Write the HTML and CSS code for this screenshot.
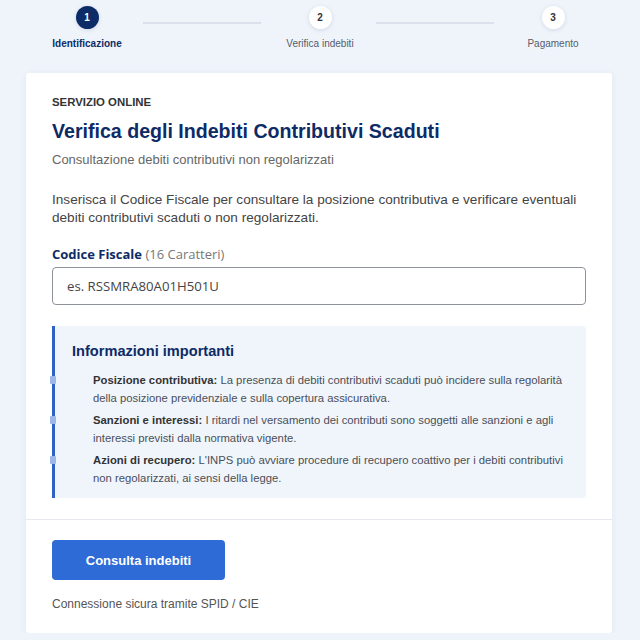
FILE: index.html
```html
<!DOCTYPE html>
<html lang="it">
<head>
<meta charset="utf-8">
<title>Verifica degli Indebiti Contributivi Scaduti</title>
<link rel="stylesheet" href="styles.css">
</head>
<body>
  <nav class="stepper">
    <div class="step step--active">
      <span class="step__dot">1</span>
      <span class="step__label">Identificazione</span>
    </div>
    <div class="step__line"></div>
    <div class="step">
      <span class="step__dot">2</span>
      <span class="step__label">Verifica indebiti</span>
    </div>
    <div class="step__line"></div>
    <div class="step">
      <span class="step__dot">3</span>
      <span class="step__label">Pagamento</span>
    </div>
  </nav>

  <main class="card">
    <section class="card__body">
      <p class="eyebrow">SERVIZIO ONLINE</p>
      <h1 class="title">Verifica degli Indebiti Contributivi Scaduti</h1>
      <p class="subtitle">Consultazione debiti contributivi non regolarizzati</p>
      <p class="intro">Inserisca il Codice Fiscale per consultare la posizione contributiva e verificare eventuali debiti contributivi scaduti o non regolarizzati.</p>

      <label class="field-label" for="cf"><strong>Codice Fiscale</strong> (16 Caratteri)</label>
      <input class="field-input" id="cf" type="text" placeholder="es. RSSMRA80A01H501U">

      <div class="info">
        <h2 class="info__title">Informazioni importanti</h2>
        <ul class="info__list">
          <li><b>Posizione contributiva:</b> La presenza di debiti contributivi scaduti può incidere sulla regolarità della posizione previdenziale e sulla copertura assicurativa.</li>
          <li><b>Sanzioni e interessi:</b> I ritardi nel versamento dei contributi sono soggetti alle sanzioni e agli interessi previsti dalla normativa vigente.</li>
          <li><b>Azioni di recupero:</b> L'INPS può avviare procedure di recupero coattivo per i debiti contributivi non regolarizzati, ai sensi della legge.</li>
        </ul>
      </div>
    </section>

    <footer class="card__footer">
      <button class="btn" type="button">Consulta indebiti</button>
      <p class="secure">Connessione sicura tramite SPID / CIE</p>
    </footer>
  </main>
</body>
</html>
```

FILE: styles.css
```css
* { box-sizing: border-box; }

body {
  margin: 0;
  background: #eff4fb;
  font-family: "Liberation Sans", Arial, sans-serif;
  color: #333;
}

/* progress steps */
.stepper {
  display: grid;
  grid-template-columns: 110px 1fr 110px 1fr 110px;
  margin: 0 32px;
  padding-top: 6px;
  height: 73px;
}

.step {
  display: flex;
  flex-direction: column;
  align-items: center;
}

.step__dot {
  width: 23px;
  height: 23px;
  border-radius: 50%;
  background: #fff;
  color: #333;
  font-size: 10px;
  font-weight: 700;
  display: flex;
  align-items: center;
  justify-content: center;
  box-shadow: 0 1px 4px rgba(30, 50, 90, 0.14);
}

.step--active .step__dot {
  background: #0d2b66;
  color: #fff;
}

.step__label {
  margin-top: 9px;
  font-size: 10px;
  color: #555c6a;
}

.step--active .step__label {
  color: #0d2b66;
  font-weight: 700;
}

.step__line {
  height: 2px;
  background: #dbe1ec;
  margin: 16px 4px 0 1px;
}

/* card */
.card {
  margin: 0 28px 0 26px;
  background: #fff;
  border-radius: 3px;
  box-shadow: 0 1px 6px rgba(30, 50, 90, 0.07);
}

.card__body {
  padding: 22px 26px 21px;
  border-bottom: 1px solid #e6e9ef;
}

.eyebrow {
  margin: 0;
  font-size: 11.4px;
  line-height: 14px;
  font-weight: 700;
  color: #333;
}

.title {
  margin: 10px 0 0;
  font-size: 19.6px;
  line-height: 24px;
  color: #0d2b66;
}

.subtitle {
  margin: 8px 0 0;
  font-size: 13px;
  line-height: 18px;
  color: #666;
}

.intro {
  margin: 22px 0 0;
  font-size: 13.6px;
  line-height: 18px;
  color: #444;
}

.field-label {
  display: block;
  margin-top: 18px;
  font-family: "Open Sans", sans-serif;
  font-size: 13px;
  line-height: 18px;
  color: #777;
}

.field-label strong {
  color: #0d2b66;
  font-weight: 700;
}

.field-input {
  display: block;
  width: 100%;
  height: 38px;
  margin-top: 4px;
  padding: 0 14px;
  border: 1px solid #8e939b;
  border-radius: 4px;
  font-family: "Open Sans", sans-serif;
  font-size: 13.2px;
  color: #333;
}

.field-input::placeholder { color: #444; }

/* info panel */
.info {
  margin-top: 21px;
  background: #f0f5fc;
  border-left: 3px solid #2b63c9;
  border-radius: 0 4px 4px 0;
  padding: 15px 18px 11px 17px;
}

.info__title {
  margin: 0;
  font-size: 14.6px;
  line-height: 20px;
  color: #0d2b66;
}

.info__list {
  list-style: none;
  margin: 10px 0 0;
  padding-left: 21px;
}

.info__list li {
  position: relative;
  font-size: 11.3px;
  line-height: 18px;
  color: #4a4f57;
}

.info__list li + li { margin-top: 4px; }

.info__list li b { color: #333; }

/* square bullet sitting on the panel's left rule */
.info__list li::before {
  content: "";
  position: absolute;
  z-index: 1;
  left: -43px;
  top: 5px;
  width: 6px;
  height: 8px;
  background: #9ab8e8;
  border-radius: 1px;
}

/* footer */
.card__footer {
  padding: 20px 26px 21px;
}

.btn {
  display: block;
  width: 173px;
  height: 40px;
  border: 0;
  border-radius: 4px;
  background: #2e6bd6;
  color: #fff;
  font-family: "Liberation Sans", Arial, sans-serif;
  font-size: 13px;
  font-weight: 700;
}

.secure {
  margin: 16px 0 0;
  font-size: 12px;
  line-height: 16px;
  color: #555;
}
```
